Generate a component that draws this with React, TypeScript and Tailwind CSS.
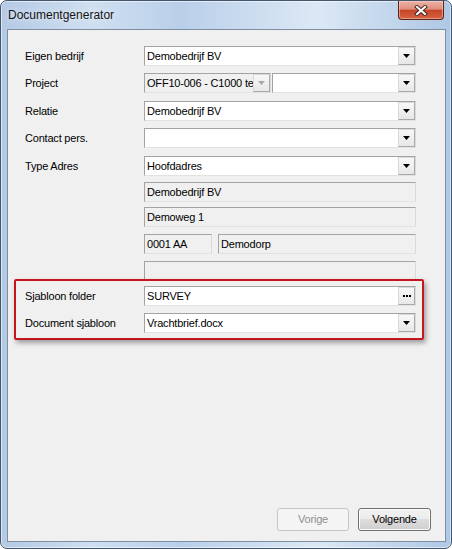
import React from "react";

const sunken = "border border-t-[#a3a3a3] border-l-[#a3a3a3] border-b-[#e2e2e2] border-r-[#dadada]";

const Tri = ({ disabled = false }: { disabled?: boolean }) => (
  <svg width="7" height="4" viewBox="0 0 7 4">
    <path d="M0 0H7L3.5 4Z" fill={disabled ? "#a8a8a8" : "#000"} />
  </svg>
);

const DropButton = ({ disabled = false, dots = false }: { disabled?: boolean; dots?: boolean }) => (
  <div className="w-[17px] h-full shrink-0 flex items-center justify-center border border-t-[#d8d8d8] border-l-[#d8d8d8] border-b-[#a9a9a9] border-r-[#a9a9a9] bg-gradient-to-b from-[#f8f8f8] to-[#e7e7e7]">
    {dots ? (
      <svg width="8" height="2" viewBox="0 0 8 2">
        <rect x="0" y="0" width="2" height="2" fill="#000" />
        <rect x="3" y="0" width="2" height="2" fill="#000" />
        <rect x="6" y="0" width="2" height="2" fill="#000" />
      </svg>
    ) : (
      <Tri disabled={disabled} />
    )}
  </div>
);

const Combo = ({ value = "", dots = false, className = "w-[272px]" }: { value?: string; dots?: boolean; className?: string }) => (
  <div className={`${className} h-[20px] ${sunken} bg-white flex items-stretch`}>
    <div className="flex-1 min-w-0 pl-[2px] flex items-center whitespace-nowrap overflow-hidden">{value}</div>
    <DropButton dots={dots} />
  </div>
);

const ReadOnly = ({ value = "", className = "w-[272px]" }: { value?: string; className?: string }) => (
  <div className={`${className} h-[20px] ${sunken} bg-[#f0f0f0] pl-[2px] flex items-center whitespace-nowrap overflow-hidden`}>
    {value}
  </div>
);

const Row = ({ label = "", mt, children }: { label?: string; mt: string; children: React.ReactNode }) => (
  <div className={`flex items-center h-[20px] ${mt}`}>
    <div className="w-[119px] shrink-0">{label}</div>
    <div className="flex gap-[6px]">{children}</div>
  </div>
);

export default function App() {
  return (
    <div className="relative w-[452px] h-[549px] rounded-[7px] border border-[#43566e] bg-[linear-gradient(90deg,#b3c9e4_0%,#cfdff1_20%,#b9cfe9_40%,#dce8f5_70%,#aec7e4_100%)] shadow-[inset_0_0_0_1px_rgba(255,255,255,0.55)] flex flex-col font-['Liberation_Sans',Arial,sans-serif] text-[11px] tracking-[-0.2px] text-black overflow-hidden">
      {/* title bar */}
      <div className="h-[28px] shrink-0 pl-[7px] flex items-center text-[12px] tracking-normal text-[#141414] [text-shadow:0_0_6px_rgba(255,255,255,0.9)]">
        Documentgenerator
      </div>

      {/* close button */}
      <div className="absolute left-[397px] top-0 w-[46px] h-[19px] rounded-b-[4px] border border-t-0 border-[#5c2419] bg-[linear-gradient(180deg,#eab3a5_0%,#df8f7c_45%,#c8452b_52%,#d4633f_100%)] shadow-[inset_0_0_0_1px_rgba(255,220,210,0.45)] flex items-center justify-center">
        <svg width="14" height="11" viewBox="0 0 14 11">
          <path d="M3 2L11 9M11 2L3 9" stroke="#4a2a24" strokeWidth="4" strokeLinecap="square" />
          <path d="M3 2L11 9M11 2L3 9" stroke="#fff" strokeWidth="2" strokeLinecap="square" />
        </svg>
      </div>

      {/* client area */}
      <div className="relative flex-1 ml-[6px] mr-[5px] mb-[6px] border border-[#7d8ea3] bg-[#f0f0f0] flex flex-col pt-[16px] pl-[17px]">
        <Row label="Eigen bedrijf" mt="mt-0">
          <Combo value="Demobedrijf BV" />
        </Row>
        <Row label="Project" mt="mt-[7px]">
          <div className="flex gap-[1px]">
            <div className={`w-[127px] h-[20px] ${sunken} bg-[#f0f0f0] flex items-stretch`}>
              <div className="flex-1 min-w-0 pl-[2px] flex items-center whitespace-nowrap overflow-hidden">OFF10-006 - C1000 te</div>
              <DropButton disabled />
            </div>
            <Combo className="w-[144px]" />
          </div>
        </Row>
        <Row label="Relatie" mt="mt-[8px]">
          <Combo value="Demobedrijf BV" />
        </Row>
        <Row label="Contact pers." mt="mt-[7px]">
          <Combo />
        </Row>
        <Row label="Type Adres" mt="mt-[8px]">
          <Combo value="Hoofdadres" />
        </Row>
        <Row mt="mt-[6px]">
          <ReadOnly value="Demobedrijf BV" />
        </Row>
        <Row mt="mt-[5px]">
          <ReadOnly value="Demoweg 1" />
        </Row>
        <Row mt="mt-[7px]">
          <ReadOnly value="0001 AA" className="w-[68px]" />
          <ReadOnly value="Demodorp" className="w-[198px]" />
        </Row>
        <Row mt="mt-[7px]">
          <ReadOnly />
        </Row>
        <Row label="Sjabloon folder" mt="mt-[5px]">
          <Combo value="SURVEY" dots />
        </Row>
        <Row label="Document sjabloon" mt="mt-[7px]">
          <Combo value="Vrachtbrief.docx" />
        </Row>

        {/* annotation frame */}
        <div className="absolute left-[6px] top-[249px] w-[410px] h-[61px] rounded-[2px] border-2 border-[#c4161c] shadow-[2px_3px_5px_rgba(0,0,0,0.35)] pointer-events-none" />

        <div className="flex-1" />

        <div className="flex justify-end gap-[9px] pr-[14px] pb-[10px]">
          <div className="w-[72px] h-[23px] rounded-[3px] border border-[#c6c6c6] bg-[#f4f4f4] text-[#8f8f8f] flex items-center justify-center">
            Vorige
          </div>
          <div className="w-[73px] h-[23px] rounded-[3px] border border-[#707070] bg-[linear-gradient(180deg,#f2f2f2_0%,#ebebeb_50%,#dddddd_50%,#cfcfcf_100%)] shadow-[inset_0_0_0_1px_#fbfbfb] flex items-center justify-center">
            Volgende
          </div>
        </div>
      </div>
    </div>
  );
}
